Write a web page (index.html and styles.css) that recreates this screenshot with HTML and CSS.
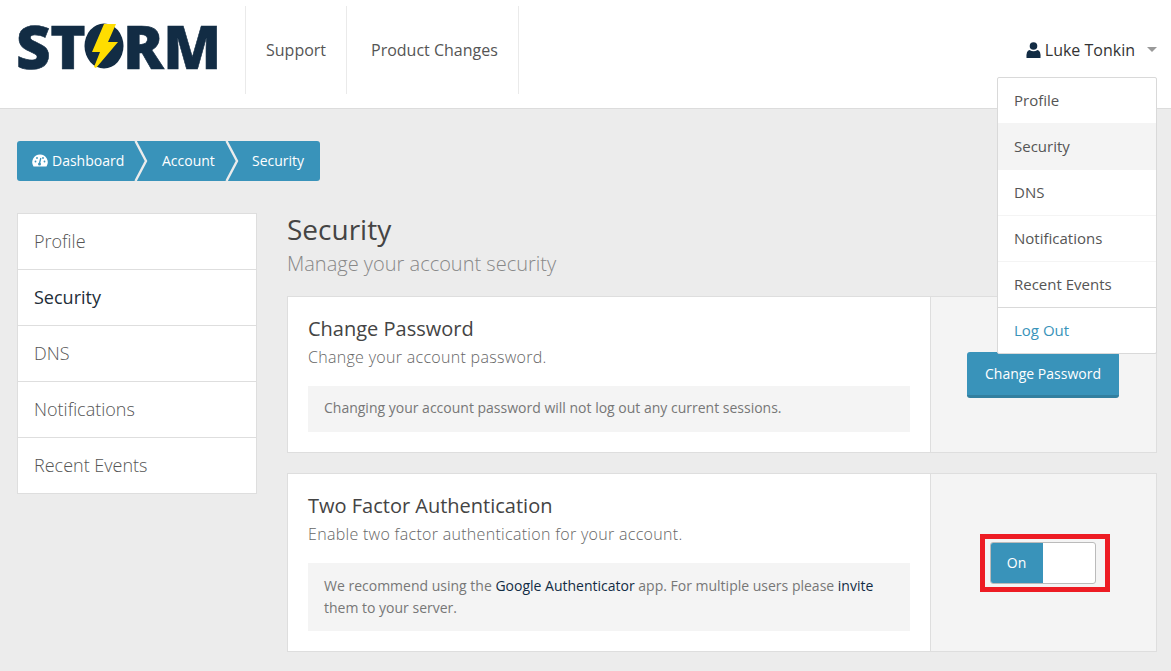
FILE: index.html
```html
<!DOCTYPE html>
<html lang="en">
<head>
<meta charset="utf-8">
<title>Security</title>
<link rel="stylesheet" href="styles.css">
</head>
<body>
<header class="topbar">
  <a class="logo">
    <span class="logo-text">ST</span>
    <svg class="logo-o" viewBox="0 0 40 46" width="40" height="46">
      <ellipse cx="20" cy="23" rx="19.500" ry="22.500" fill="#122c44"/>
      <path d="M20 1 L32 1 L24 19 L34 19 L12 45 L10 44 L16 29 L8 29 Z" fill="#ffdd00"/>
    </svg>
    <span class="logo-text">RM</span>
  </a>
  <nav class="mainnav">
    <a class="navlink">Support</a>
    <a class="navlink">Product Changes</a>
  </nav>
  <div class="user">
    <svg class="user-icon" viewBox="0 0 15 16" width="15" height="16"><circle cx="7.500" cy="4" r="3.800" fill="#122c44"/><path d="M0.500 16 Q0 8.500 3.500 8 Q7.500 10.500 11.500 8 Q15 8.500 14.500 16 Z" fill="#122c44"/></svg>
    <span class="user-name">Luke Tonkin</span>
    <span class="caret"></span>
  </div>
  <ul class="dropdown">
    <li class="ditem">Profile</li>
    <li class="ditem ditem-active">Security</li>
    <li class="ditem">DNS</li>
    <li class="ditem">Notifications</li>
    <li class="ditem">Recent Events</li>
    <li class="ditem ditem-link">Log Out</li>
  </ul>
</header>
<main class="page">
  <div class="crumbs">
    <a class="crumb crumb-first">
      <svg class="gauge" viewBox="0 0 16 13" width="16" height="13"><path d="M8 0.500 A7.800 7.800 0 0 0 1.500 12.500 L14.500 12.500 A7.800 7.800 0 0 0 8 0.500 Z" fill="#fff"/><path d="M8.800 4 L7.600 9" stroke="#3993ba" stroke-width="1.300" fill="none"/><circle cx="7.500" cy="10" r="1.500" fill="#3993ba"/><circle cx="3.500" cy="7.500" r="0.900" fill="#3993ba"/><circle cx="12.500" cy="7.500" r="0.900" fill="#3993ba"/><circle cx="5" cy="4" r="0.900" fill="#3993ba"/><circle cx="11" cy="4" r="0.900" fill="#3993ba"/></svg>
      Dashboard
      <svg class="chev" viewBox="0 0 14 40" width="14" height="40"><path d="M1.500 0 L12 20 L1.500 40" fill="none" stroke="#ececec" stroke-width="2.400"/></svg>
    </a>
    <a class="crumb crumb-mid">Account
      <svg class="chev" viewBox="0 0 14 40" width="14" height="40"><path d="M1.500 0 L12 20 L1.500 40" fill="none" stroke="#ececec" stroke-width="2.400"/></svg>
    </a>
    <a class="crumb crumb-last">Security</a>
  </div>
  <div class="columns">
    <ul class="sidenav">
      <li class="sitem">Profile</li>
      <li class="sitem sitem-active">Security</li>
      <li class="sitem">DNS</li>
      <li class="sitem">Notifications</li>
      <li class="sitem">Recent Events</li>
    </ul>
    <section class="content">
      <h1 class="title">Security</h1>
      <p class="subtitle">Manage your account security</p>
      <article class="panel panel-one">
        <div class="panel-body">
          <h2 class="panel-title">Change Password</h2>
          <p class="panel-desc">Change your account password.</p>
          <div class="note">Changing your account password will not log out any current sessions.</div>
        </div>
        <div class="panel-side">
          <a class="btn">Change Password</a>
        </div>
      </article>
      <article class="panel panel-two">
        <div class="panel-body">
          <h2 class="panel-title">Two Factor Authentication</h2>
          <p class="panel-desc">Enable two factor authentication for your account.</p>
          <div class="note note-double">We recommend using the <a class="notelink">Google Authenticator</a> app. For multiple users please <a class="notelink">invite</a> them to your server.</div>
        </div>
        <div class="panel-side">
          <div class="highlight">
            <div class="toggle"><span class="toggle-on">On</span><span class="toggle-off"></span></div>
          </div>
        </div>
      </article>
    </section>
  </div>
</main>
</body>
</html>
```
FILE: styles.css
```css
* { box-sizing: border-box; }
html, body { margin: 0; padding: 0; }
body {
  width: 1171px;
  height: 671px;
  overflow: hidden;
  background: #ececec;
  font-family: "Open Sans", "Liberation Sans", sans-serif;
  color: #555;
}
ul { list-style: none; margin: 0; padding: 0; }
h1, h2, p { margin: 0; font-weight: 400; }

.topbar {
  position: relative;
  height: 109px;
  background: #fff;
  border-bottom: 1px solid #dcdcdc;
  display: flex;
  align-items: flex-start;
  padding: 6px 14px 0 16px;
}
.logo {
  width: 229px;
  height: 80px;
  display: flex;
  align-items: center;
  color: #122c44;
}
.logo-text {
  font-family: "Open Sans", sans-serif;
  font-weight: 800;
  font-size: 60px;
  line-height: 80px;
  letter-spacing: -0.5px;
  color: #122c44;
  -webkit-text-stroke: 0.6px #122c44;
}
.logo-o { flex: none; margin: 0 -1px; }
.mainnav { display: flex; border-left: 1px solid #eaeaea; height: 88px; }
.navlink {
  display: flex;
  align-items: center;
  padding: 0 20px;
  border-right: 1px solid #eaeaea;
  font-size: 16px;
  color: #555;
  height: 88px;
  white-space: nowrap;
}
.navlink + .navlink { padding: 0 20px 0 24px; }
.user {
  margin-left: auto;
  height: 88px;
  display: flex;
  align-items: center;
  font-size: 16px;
  color: #333;
}
.user-icon { margin-right: 4px; }
.user-name { color: #333; }
.caret {
  margin-left: 12px;
  border-left: 5px solid transparent;
  border-right: 5px solid transparent;
  border-top: 5px solid #999;
  margin-top: -2px;
}
.dropdown {
  position: absolute;
  left: 997px;
  top: 77px;
  width: 160px;
  background: #fff;
  border: 1px solid #d9d9d9;
  border-radius: 2px;
  z-index: 5;
}
.ditem {
  height: 46px;
  line-height: 44px;
  padding-left: 16px;
  font-size: 15px;
  color: #555;
  border-bottom: 1px solid #f4f4f4;
}
.ditem-active { background: #f4f4f4; }
.ditem:nth-child(5) { border-bottom-color: #d9d9d9; }
.ditem:last-child { border-bottom: 0; height: 45px; }
.ditem-link { color: #3993ba; }

.page { padding: 32px 14px 0 17px; }
.crumbs {
  display: inline-flex;
  height: 40px;
  background: #3993ba;
  border-radius: 3px;
  color: #fff;
  font-size: 14px;
}
.crumb {
  position: relative;
  display: flex;
  align-items: center;
  color: #fff;
  padding-bottom: 2px;
}
.crumb-first { width: 118px; padding-left: 15px; }
.crumb-mid { width: 92px; padding-left: 27px; }
.crumb-last { width: 93px; padding-left: 25px; }
.gauge { margin-right: 4px; }
.chev { position: absolute; right: -13px; top: 0; z-index: 1; }
.crumb-mid .chev { right: -12px; }

.columns { display: flex; gap: 30px; margin-top: 32px; align-items: flex-start; }
.sidenav {
  width: 240px;
  flex: none;
  background: #fff;
  border: 1px solid #dedede;
}
.sitem {
  height: 56px;
  line-height: 55px;
  padding-left: 16px;
  font-size: 18px;
  font-weight: 300;
  color: #555;
  border-bottom: 1px solid #dedede;
}
.sitem:last-child { border-bottom: 0; height: 55px; }
.sitem-active { color: #222d38; font-weight: 400; }

.content { flex: 1; min-width: 0; }
.title { font-size: 28px; line-height: 32px; color: #444; }
.subtitle { font-size: 20px; font-weight: 300; line-height: 32px; color: #888; margin-top: 3px; margin-bottom: 16px; }
.panel {
  display: flex;
  background: #fff;
  border: 1px solid #dedede;
  margin-bottom: 20px;
}
.panel-one { height: 157px; }
.panel-two { height: 179px; }
.panel-body { flex: 1; padding: 18px 20px 0; min-width: 0; }
.panel-title { font-size: 20px; line-height: 27px; color: #444; }
.panel-desc { font-size: 16px; letter-spacing: 0.3px; font-weight: 300; line-height: 28px; color: #666; margin-top: 1px; margin-bottom: 15px; }
.note {
  background: #f4f4f4;
  padding: 11px 16px 13px;
  font-size: 14px;
  line-height: 22px;
  color: #777;
}
.note-double { padding: 12px 16px; }
.notelink { color: #122c44; }
.panel-side {
  width: 226px;
  flex: none;
  background: #f4f4f4;
  border-left: 1px solid #dedede;
  display: flex;
  justify-content: center;
  align-items: center;
}
.btn {
  display: block;
  width: 152px;
  height: 46px;
  padding-left: 1px;
  background: #3993ba;
  border-bottom: 3px solid #327f9f;
  border-radius: 3px;
  color: #fff;
  font-size: 14px;
  font-weight: 500;
  line-height: 43px;
  text-align: center;
  margin-right: 2px;
}
.highlight {
  border: 5px solid #ed1c24;
  padding: 3px 5px;
  width: 130px;
  height: 58px;
  margin-top: 1px;
  margin-left: 2px;
}
.toggle {
  display: flex;
  width: 106px;
  height: 42px;
  background: #fff;
  border: 1px solid #bbb;
  border-radius: 3px;
  overflow: hidden;
}
.toggle-on {
  width: 52px;
  background: #3993ba;
  color: #fff;
  font-size: 14px;
  line-height: 40px;
  text-align: center;
}
.toggle-off { flex: 1; }
```
